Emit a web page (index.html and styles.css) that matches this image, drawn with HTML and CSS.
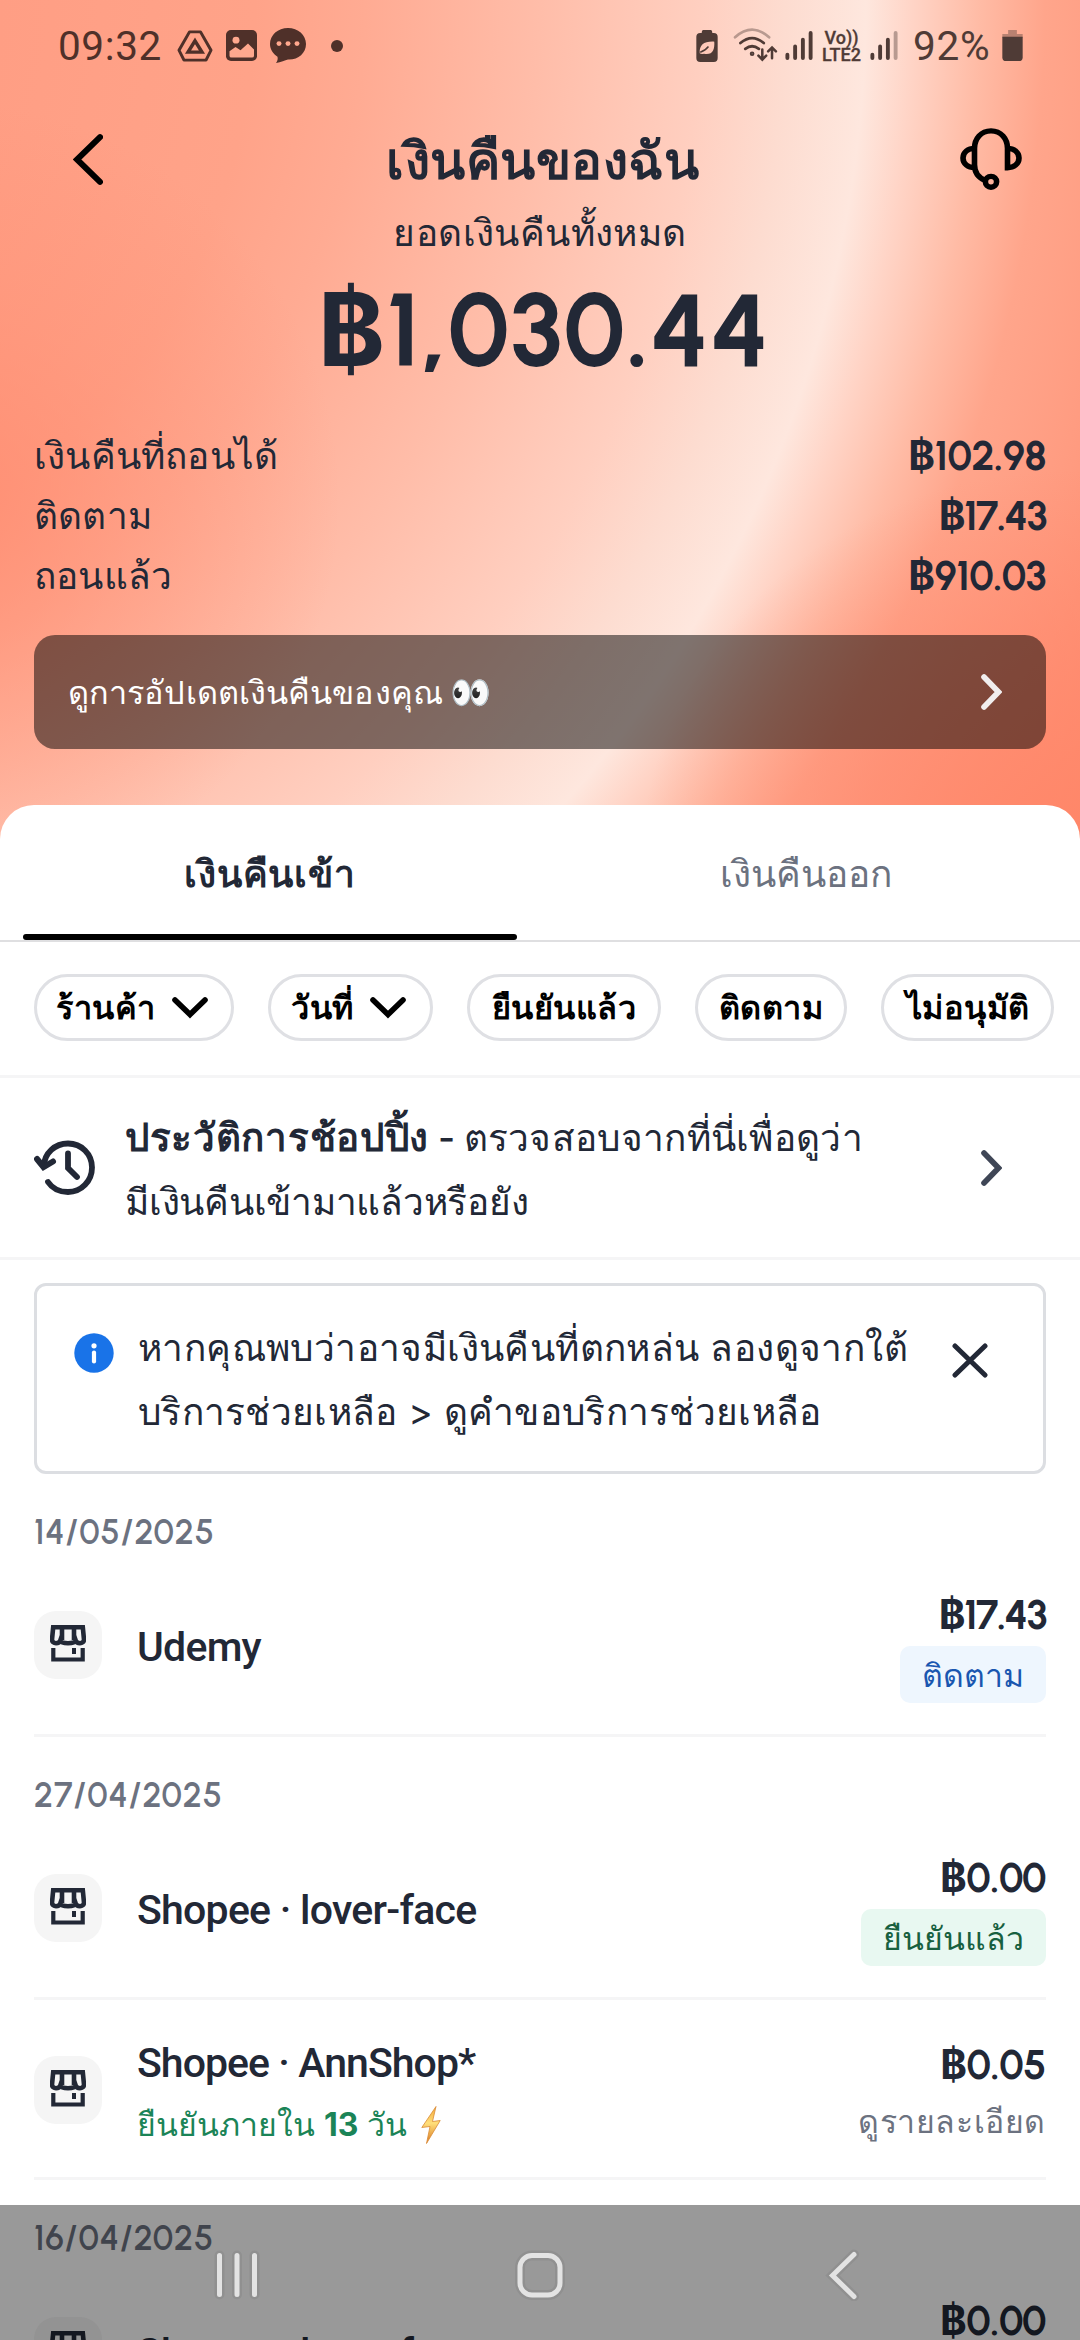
FILE: index.html
```
<!DOCTYPE html>
<html lang="th">
<head>
<meta charset="utf-8">
<title>เงินคืนของฉัน</title>
<link rel="stylesheet" href="styles.css">
</head>
<body>
<svg class="defs" aria-hidden="true">
  <symbol id="store" viewBox="0 0 36 37">
    <path d="M3.2 2.2H32.8L34 14.5C34 17 32 18.200 30 18.200C27.500 18.200 26.200 17 25.800 15.800C25 17.400 22 18.200 18 18.200C14 18.200 11 17.400 10.200 15.800C9.800 17 8.500 18.200 6 18.200C4 18.200 2 17 2 14.500Z M12 2V15 M24 2V15" fill="none" stroke="currentColor" stroke-width="4.600"/>
    <path d="M3.300 23V34.500H32.700V23" fill="none" stroke="currentColor" stroke-width="4.200"/>
    <path d="M22 23H26V29H22Z" fill="currentColor"/>
  </symbol>
  <symbol id="chev" viewBox="0 0 21 36"><path d="M3 3L17.500 18L3 33" fill="none" stroke="currentColor" stroke-width="5.600" stroke-linecap="round"/></symbol>
  <symbol id="down" viewBox="0 0 36 22"><path d="M3 3L18 17.500L33 3" fill="none" stroke="currentColor" stroke-width="5.600" stroke-linecap="round"/></symbol>
</svg>

<header class="hero">
  <div class="status">
    <span class="clock">09:32</span>
    <svg class="s-drive" width="36" height="32" viewBox="0 0 36 34" preserveAspectRatio="none" fill="none" stroke="currentColor"><path d="M12.500 2H23.500L34 21.500L29 32H7L2 21.500Z" stroke-width="3" stroke-linejoin="round"/><path d="M18 11.500L25 23.500H11Z" stroke-width="3.500"/></svg>
    <svg class="s-pic" width="31" height="31" viewBox="0 0 31 32" preserveAspectRatio="none"><rect width="31" height="32" rx="5" fill="currentColor"/><circle cx="10" cy="10.500" r="3.500" class="cut"/><path d="M3.500 22L9.500 17.500L14.500 21L22 14L28 20V26.500Q28 28.500 26 28.500H5.500Q3.500 28.500 3.500 26.500Z" class="cut"/></svg>
    <svg class="s-chat" width="36" height="35" viewBox="0 0 36 36" preserveAspectRatio="none"><path d="M18 0C28 0 36 7 36 16.500C36 26 28 33 18 32.500C15 33 11 35.500 6 36C7.500 34 8 31.500 7.500 29.500C3 26.500 0 22 0 16.500C0 7 8 0 18 0Z" fill="currentColor"/><circle cx="9" cy="16" r="2.500" class="cut"/><circle cx="18" cy="16" r="2.500" class="cut"/><circle cx="27" cy="16" r="2.500" class="cut"/></svg>
    <i class="dot"></i>
    <div class="status-right">
      <svg width="22" height="32" viewBox="0 0 22 33"><path d="M7 0H15Q16.500 0 16.500 3H18Q22 3 22 7V29Q22 33 18 33H4Q0 33 0 29V7Q0 3 4 3H5.500Q5.500 0 7 0Z" fill="currentColor"/><path d="M3.500 24C3 15 8 11.500 18.500 12C19 20 17 26 8 24.500Q5 25 3.500 24Z" fill="#ffc9b9"/><path d="M4 23Q9 21.500 12.500 17" fill="none" stroke="currentColor" stroke-width="1.500"/></svg>
      <svg class="s-wifi" width="45" height="35" viewBox="0 0 45 36" fill="none" stroke="currentColor" stroke-width="2.800" stroke-linecap="round"><path d="M1.500 9.500Q19-6 36.500 9.500" opacity=".4"/><path d="M7 15.500Q19 5.500 31 15.500M12 21.500Q19 16 26 21.500"/><circle cx="19" cy="26.500" r="1" /><path d="M29.500 22V32M25.500 28.500L29.500 32.500L33.500 28.500M39.500 31V20.500M35.500 24L39.500 20L43.500 24" stroke-width="2.600"/></svg>
      <svg class="s-sig" width="28" height="31" viewBox="0 0 28 32" stroke="currentColor" stroke-width="4" stroke-linecap="round"><path d="M2 25.500V29M10 17V29M18 10V29M26 3V29"/></svg>
      <span class="volte">Vo))<br>LTE2</span>
      <svg class="s-sig2" width="28" height="31" viewBox="0 0 28 32" stroke="currentColor" stroke-width="4" stroke-linecap="round"><path d="M2 25.500V29M10 17V29M18 10V29"/><path d="M26 3V29" opacity=".4"/></svg>
      <span class="pct">92%</span>
      <svg width="21" height="31" viewBox="0 0 21 32"><path d="M6 0H15V4H21V8H0V4H6Z" fill="currentColor" opacity=".4"/><path d="M0 7H21V28Q21 32 17 32H4Q0 32 0 28Z" fill="currentColor"/></svg>
    </div>
  </div>
  <div class="nav">
    <svg width="30" height="51" viewBox="0 0 30 51"><path d="M27 3.200L4 25.500L27 47.800" fill="none" stroke="#000" stroke-width="6" stroke-linecap="round"/></svg>
    <h1>เงินคืนของฉัน</h1>
    <svg width="62" height="62" viewBox="0 0 62 64" preserveAspectRatio="none" fill="none" stroke="#000" stroke-width="5.600"><path d="M14.500 21V38C14.500 46 19 51.500 25 54M14.500 21C14.500 11 21 3 31 3C41 3 47.500 11 47.500 21V41C54 41 59 37 59 31C59 25 54 21 47.500 21M14.500 21C8 21 3 25 3 31C3 37 8 41 14.500 41"/><circle cx="31" cy="55.500" r="5.600"/></svg>
  </div>
  <p class="subtitle">ยอดเงินคืนทั้งหมด</p>
  <p class="total">฿1,030.44</p>
  <dl class="sums">
    <div><dt>เงินคืนที่ถอนได้</dt><dd>฿102.98</dd></div>
    <div><dt>ติดตาม</dt><dd>฿17.43</dd></div>
    <div><dt>ถอนแล้ว</dt><dd>฿910.03</dd></div>
  </dl>
  <div class="updates"><span class="updates-text">ดูการอัปเดตเงินคืนของคุณ</span><span class="eyes">👀</span><svg class="go" width="21" height="36"><use href="#chev"/></svg></div>
</header>

<main class="sheet">
  <div class="tabs"><div class="tab active">เงินคืนเข้า</div><div class="tab out">เงินคืนออก</div></div>
  <div class="chips">
    <span class="chip c1">ร้านค้า<svg width="36" height="22"><use href="#down"/></svg></span>
    <span class="chip c2">วันที่<svg width="36" height="22"><use href="#down"/></svg></span>
    <span class="chip c3">ยืนยันแล้ว</span>
    <span class="chip c4">ติดตาม</span>
    <span class="chip c5">ไม่อนุมัติ</span>
  </div>
  <div class="history">
    <svg class="clock-icon" width="62" height="56" viewBox="0 0 62 56" fill="none" stroke="currentColor" stroke-width="5.800" stroke-linecap="round"><path d="M9.800 26C10.500 13 21 3.500 34 3.500C47.500 3.500 58 14 58 27.500C58 41 47.500 52 34 52C25.500 52 18 48 14 42"/><path d="M34 13.500V28L43 37"/><path d="M3 19L9.500 27L19 21.500" stroke-width="6"/></svg>
    <p class="history-text"><span class="h1l"><b>ประวัติการช้อปปิ้ง</b><span class="dash">-</span>ตรวจสอบจากที่นี่เพื่อดูว่า</span><br><span class="h2l">มีเงินคืนเข้ามาแล้วหรือยัง</span></p>
    <svg class="go" width="21" height="36"><use href="#chev"/></svg>
  </div>
  <div class="info">
    <svg class="i" width="40" height="40" viewBox="0 0 40 40"><circle cx="20" cy="20" r="19.700" fill="#1973e8"/><circle cx="20" cy="12.800" r="2.600" fill="#fff"/><path d="M20 19.500V28.500" stroke="#fff" stroke-width="4.200" stroke-linecap="round"/></svg>
    <p class="info-text"><span class="i1l">หากคุณพบว่าอาจมีเงินคืนที่ตกหล่น ลองดูจากใต้</span><br><span class="i2l">บริการช่วยเหลือ &gt; ดูคำขอบริการช่วยเหลือ</span></p>
    <svg class="x" width="36" height="35" viewBox="0 0 36 35"><path d="M3 3L33 32M33 3L3 32" stroke="currentColor" stroke-width="5" stroke-linecap="round"/></svg>
  </div>

  <h2 class="date">14/05/2025</h2>
  <div class="item">
    <span class="shop"><svg width="36" height="37"><use href="#store"/></svg></span>
    <p class="name">Udemy</p>
    <div class="right"><span class="amt tight">฿17.43</span><span class="badge blue">ติดตาม</span></div>
  </div>
  <h2 class="date">27/04/2025</h2>
  <div class="item">
    <span class="shop"><svg width="36" height="37"><use href="#store"/></svg></span>
    <p class="name">Shopee · lover-face</p>
    <div class="right"><span class="amt">฿0.00</span><span class="badge green">ยืนยันแล้ว</span></div>
  </div>
  <div class="item tall">
    <span class="shop"><svg width="36" height="37"><use href="#store"/></svg></span>
    <div class="two"><p class="name">Shopee · AnnShop*</p><p class="eta">ยืนยันภายใน <b>13</b> วัน<svg class="bolt" width="20" height="38" viewBox="0 0 20 38"><defs><linearGradient id="bg" x1="0" y1="0" x2="0" y2="1"><stop offset="0" stop-color="#f2a93b"/><stop offset=".45" stop-color="#ffdf7a"/><stop offset="1" stop-color="#d9771f"/></linearGradient></defs><path d="M15 .5L.8 21.500L9 20.500L5.500 37.500L19.200 14.500L11.500 15.500Z" fill="url(#bg)" stroke="#d98a35" stroke-width=".8"/></svg></p></div>
    <div class="right"><span class="amt">฿0.05</span><span class="more">ดูรายละเอียด</span></div>
  </div>
  <h2 class="date">16/04/2025</h2>
  <div class="item">
    <span class="shop"><svg width="36" height="37"><use href="#store"/></svg></span>
    <p class="name">Shopee · lover-face</p>
    <div class="right"><span class="amt">฿0.00</span></div>
  </div>
</main>

<div class="sysbar">
  <svg width="52" height="52" viewBox="0 0 52 52"><path d="M8.500 6.500V45.500M26 6.500V45.500M43.500 6.500V45.500" class="halo"/><path d="M8.500 6.500V45.500M26 6.500V45.500M43.500 6.500V45.500" class="line"/></svg>
  <svg width="52" height="52" viewBox="0 0 52 52"><rect x="6" y="6.500" width="40" height="39.500" rx="12" class="halo"/><rect x="6" y="6.500" width="40" height="39.500" rx="12" class="line"/></svg>
  <svg width="52" height="52" viewBox="0 0 52 52"><path d="M37 5.500L15.500 26.500L37 47.500" class="halo"/><path d="M37 5.500L15.500 26.500L37 47.500" class="line"/></svg>
</div>
</body>
</html>
```
FILE: styles.css
```
* { box-sizing: border-box; margin: 0; padding: 0; }
body {
  width: 1080px;
  height: 2340px;
  overflow: hidden;
  position: relative;
  background: #fff;
  color: #222836;
  font-family: Inter, "Noto Sans", sans-serif;
  font-size: 37px;
  white-space: nowrap;
}
svg { display: block; flex: none; }
.defs { display: none; }

.hero {
  height: 847px;
  padding: 0 34px;
  background:
    radial-gradient(ellipse 430px 400px at 1070px 870px, rgba(255,134,104,.9), rgba(255,136,108,.6) 50%, transparent),
    radial-gradient(ellipse 400px 400px at -60px 500px, rgba(255,138,110,.8), rgba(255,138,110,.35) 50%, transparent),
    radial-gradient(circle 1700px at -355px 0, #ff9e84 355px, #ffa389 610px, #ffab93 720px, #ffbda9 895px, #ffcfc0 1055px, #fddcd0 1140px, #fee7de 1221px, #ffd4c6 1268px, #ffbba5 1335px, #ffa58b 1400px, #ff9b80 1500px, #ff8a6c 1650px);
}
.status { height: 91px; display: flex; align-items: center; padding-left: 23px; color: #4f3029; }
.clock, .pct { font-family: Roboto, sans-serif; font-weight: 400; font-size: 40.5px; line-height: 50px; }
.clock { width: 104px; margin-left: 1px; letter-spacing: .6px; }
.s-drive { margin-left: 15px; }
.s-pic { margin-left: 13px; }
.s-chat { margin-left: 13px; }
.cut { fill: #ffa88e; }
.dot { width: 12px; height: 12px; border-radius: 50%; background: currentColor; margin-left: 25px; }
.status-right { margin-left: auto; margin-right: 23px; display: flex; align-items: center; color: #4f3b36; }
.s-wifi { margin-left: 15px; }
.s-sig { margin-left: 7px; }
.s-sig2 { margin-left: 9px; }
.volte { margin-left: 9px; width: 39px; font: 500 18px/17px Roboto, sans-serif; text-align: center; -webkit-text-stroke: .3px; }
.pct { width: 83px; margin-left: 15px; margin-right: 6px; letter-spacing: .8px; }

.nav { height: 113px; padding: 23px 24px 0 39px; display: flex; align-items: center; justify-content: space-between; }
h1 { font-size: 51.5px; line-height: 86px; margin: 2px 0 0 22px; font-weight: 700; letter-spacing: .5px; }
.subtitle { text-align: center; line-height: 58px; height: 60px; letter-spacing: .4px; }
.total { text-align: center; font: 700 102px/133px Urbanist, Montserrat, Inter, sans-serif; letter-spacing: 1px; height: 132px; padding-left: 8px; }
.sums { margin-top: 30px; }
.sums div { height: 60px; line-height: 60px; display: flex; justify-content: space-between; letter-spacing: .2px; }
dd, .amt { font-family: Urbanist, Montserrat, Inter, sans-serif; font-weight: 700; font-size: 40.5px; letter-spacing: -.5px; }
.tight, .sums div:nth-child(2) dd { letter-spacing: -1.4px; }
.updates { margin-top: 29px; height: 114px; border-radius: 21px; background: rgba(0,0,0,.5); color: #fff; font-size: 32.5px; letter-spacing: .1px; display: flex; align-items: center; padding: 0 44px 0 34px; }
.eyes { margin-left: 7px; font-size: 33px; }
.go { margin-left: auto; }
.updates .go { color: #f1eeee; }

.sheet { margin-top: -42px; background: #fff; border-radius: 34px 34px 0 0; position: relative; height: 1535px; overflow: hidden; }
.tabs { height: 137px; display: flex; border-bottom: 2px solid #dfdfe1; }
.tab { flex: none; width: 540px; text-align: center; line-height: 137px; color: #6c7280; position: relative; }
.out { padding-right: 9px; }
.tab.active { color: #222836; font-weight: 700; letter-spacing: .9px; }
.tab.active::after { content: ""; position: absolute; left: 23px; right: 23px; bottom: 0; height: 6px; border-radius: 3px; background: #000; }
.chips { height: 136px; padding: 32px 0 0 34px; display: flex; gap: 34px; border-bottom: 3px solid #f5f5f6; color: #000; font-size: 32.5px; font-weight: 700; letter-spacing: .5px; }
.chip { height: 67px; border: 3px solid #dfe0e4; border-radius: 34px; display: flex; align-items: center; justify-content: center; gap: 16px; flex: none; line-height: 62px; }
.chip svg { margin-right: 4px; }
.c1 { width: 200px; } .c2 { width: 165px; } .c3 { width: 194px; } .c4 { width: 152px; } .c5 { width: 173px; }
.history { height: 182px; border-bottom: 3px solid #f5f5f6; padding: 0 78px 0 34px; display: flex; align-items: center; }
.history-text { line-height: 64px; margin-left: 29px; padding-top: 4px; }
.history-text b { font-size: 38.5px; letter-spacing: .7px; }
.h1l { letter-spacing: .3px; }
.h2l { letter-spacing: -.25px; }
.dash { margin: 0 8px 0 9px; font-weight: 500; }
.history .go { color: #3f4656; }
.info { margin: 23px 34px 0; height: 191px; border: 3px solid #dcdee2; border-radius: 12px; padding: 30px 0 0 37px; display: flex; }
.i { margin-top: 17px; }
.info-text { line-height: 64px; margin-left: 24px; width: 782px; }
.i1l { letter-spacing: .4px; }
.i2l { letter-spacing: .3px; }
.x { margin: 27px 0 0 32px; }

.date { margin: 28px 34px 0 34px; font: 600 34px/61px Urbanist, Montserrat, Inter, sans-serif; height: 60px; letter-spacing: .8px; color: #6c7280; }
.item { margin: 0 34px; height: 175px; border-bottom: 3px solid #f5f5f6; display: flex; align-items: flex-start; padding-top: 23px; }
.shop { width: 68px; height: 68px; margin-top: 26px; border-radius: 22px; background: #f5f5f5; display: flex; justify-content: center; padding-top: 14px; flex: none; }
.name { font: 500 41px/58px Roboto, Inter, sans-serif; letter-spacing: -.75px; margin: 33px 0 0 35px; }
.right { margin-left: auto; display: flex; flex-direction: column; align-items: flex-end; }
.amt { line-height: 60px; height: 58px; }
.badge { margin-top: 3px; height: 57px; line-height: 59px; padding: 0 22px; border-radius: 10px; font-size: 32px; }
.blue { background: #eef6fe; color: #1a56b0; }
.green { background: #e8f8f1; color: #17603f; }
.tall { height: 180px; padding-top: 33px; }
.tall .shop { margin-top: 23px; }
.tall .name { margin-top: 1px; letter-spacing: -.95px; }
.tall .right { padding-top: 2px; }
.eta { margin: 4px 0 0 35px; line-height: 58px; font-size: 32px; color: #1b8457; display: flex; align-items: center; white-space: pre; }
.bolt { margin-left: 14px; }
.more { line-height: 58px; font-size: 32px; letter-spacing: .6px; color: #6c7280; }

.sysbar { position: absolute; left: 0; right: 0; bottom: 0; height: 135px; background: rgba(0,0,0,.4); display: flex; justify-content: space-between; padding: 44px 211px 0 211px; }
.halo { fill: none; stroke: rgba(0,0,0,.06); stroke-width: 10; stroke-linecap: round; }
.line { fill: none; stroke: #e3e3e3; stroke-width: 5; stroke-linecap: round; }
```
